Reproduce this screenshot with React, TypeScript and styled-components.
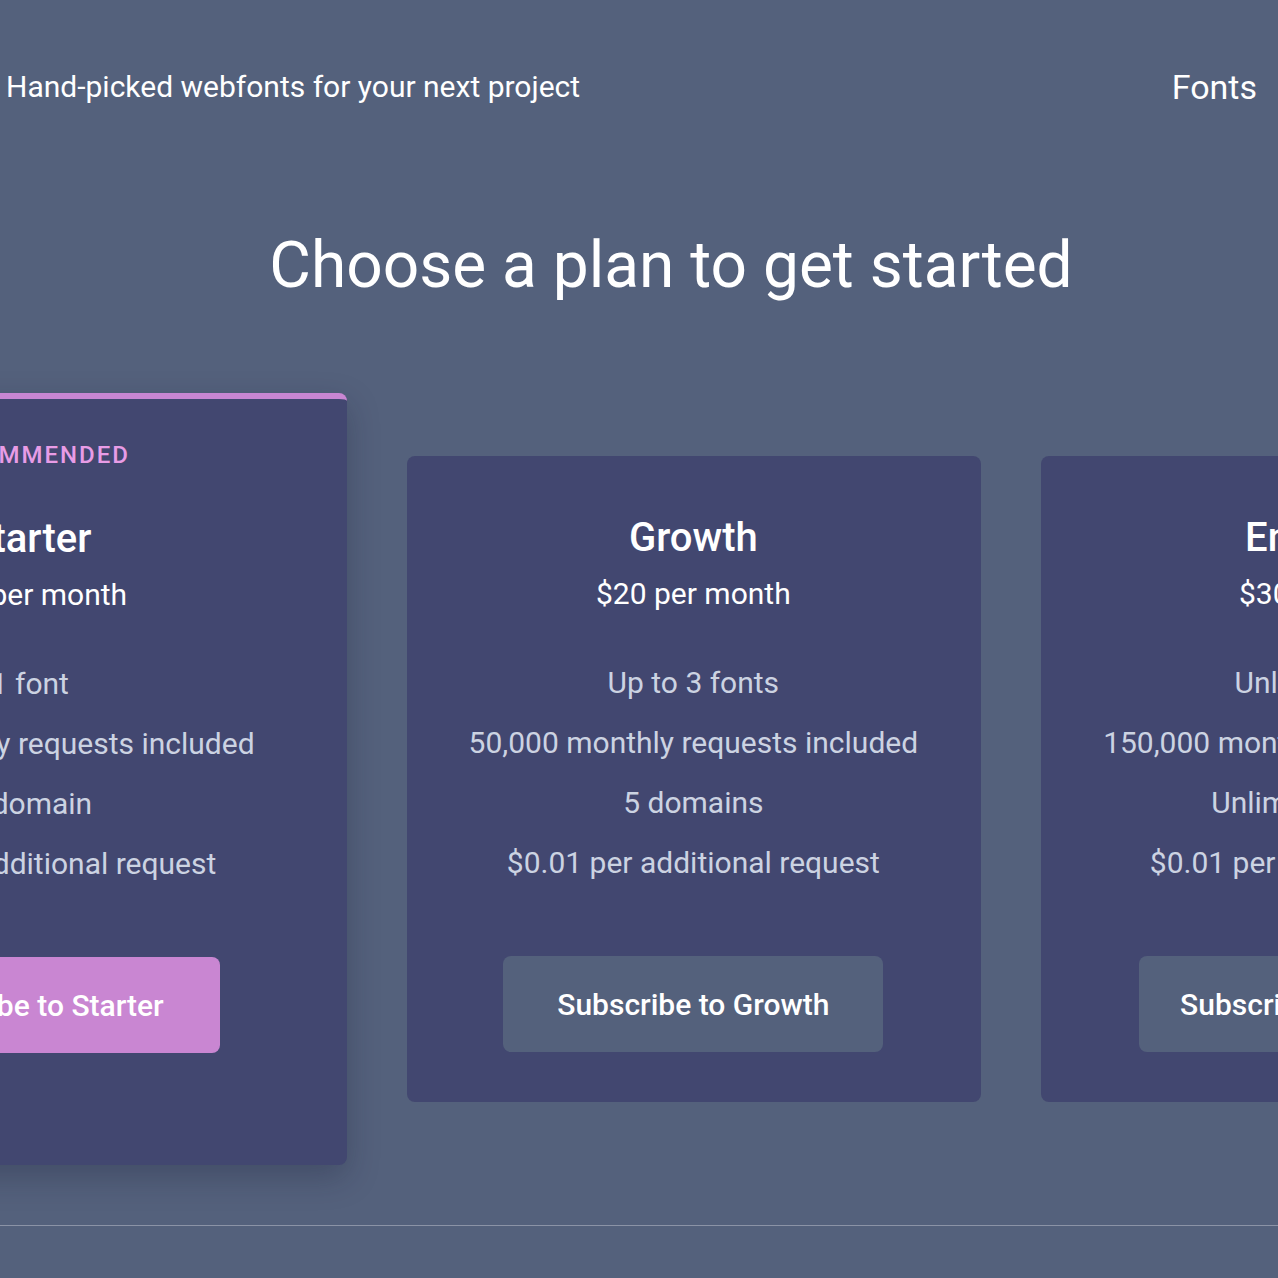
import React from "react";
import styled, { createGlobalStyle } from "styled-components";

const Global = createGlobalStyle`
  html, body {
    margin: 0;
    padding: 0;
    background: #54617c;
    overflow-x: hidden;
  }
  body {
    font-family: Roboto, "Liberation Sans", Arial, sans-serif;
    color: #ffffff;
  }
`;

const Page = styled.div`
  min-height: 1278px;
  background: #54617c;
  display: flex;
  flex-direction: column;
`;

const Header = styled.header`
  display: flex;
  justify-content: space-between;
  align-items: center;
  padding: 70px 21px 0 6px;
`;

const Tagline = styled.div`
  font-size: 30px;
  line-height: 34px;
  color: #ffffff;
`;

const NavLink = styled.a`
  font-size: 34px;
  line-height: 34px;
  color: #ffffff;
  text-decoration: none;
`;

const Title = styled.h1`
  margin: 123px 0 0;
  padding-left: 64px;
  text-align: center;
  font-size: 64px;
  line-height: 77px;
  font-weight: 400;
  color: #ffffff;
`;

const CardRow = styled.div`
  display: flex;
  align-items: center;
  gap: 60px;
  width: max-content;
  margin: 89px 0 0 -287px;
`;

const Card = styled.div<{ $featured?: boolean }>`
  box-sizing: border-box;
  background: #424770;
  border-radius: 8px;
  border-top: ${(p) => (p.$featured ? "6px solid #c986d2" : "none")};
  padding: ${(p) => (p.$featured ? "42px 92px 112px" : "60px 63px 50px 62px")};
  display: flex;
  flex-direction: column;
  align-items: center;
  text-align: center;
  box-shadow: ${(p) =>
    p.$featured ? "0 12px 32px rgba(20, 24, 50, 0.28)" : "none"};
`;

const Badge = styled.div`
  font-size: 24px;
  line-height: 29px;
  font-weight: 500;
  letter-spacing: 2px;
  color: #e89ce6;
  margin-bottom: 47px;
`;

const PlanName = styled.h2`
  margin: 0;
  font-size: 40px;
  line-height: 43px;
  font-weight: 500;
  color: #ffffff;
`;

const Price = styled.div`
  margin-top: 18px;
  font-size: 30px;
  line-height: 34px;
  color: #ffffff;
`;

const Features = styled.ul`
  list-style: none;
  margin: 42px 0 0;
  padding: 0;
`;

const Feature = styled.li`
  font-size: 30px;
  line-height: 60px;
  color: #ccd3e2;
  white-space: nowrap;
`;

const SubscribeButton = styled.button<{ $primary?: boolean }>`
  margin-top: 63px;
  min-width: 380px;
  height: 96px;
  padding: 0 41px;
  border: none;
  border-radius: 8px;
  background: ${(p) => (p.$primary ? "#c986d2" : "#54617c")};
  color: #ffffff;
  font-family: Roboto, "Liberation Sans", Arial, sans-serif;
  font-size: 30px;
  font-weight: 500;
  cursor: pointer;
  white-space: nowrap;
`;

const Footer = styled.footer`
  margin-top: 60px;
  border-top: 1px solid rgba(255, 255, 255, 0.32);
  height: 52px;
`;

type Plan = {
  name: string;
  price: string;
  features: string[];
  featured?: boolean;
};

const plans: Plan[] = [
  {
    name: "Starter",
    price: "$10 per month",
    features: [
      "1 font",
      "10,000 monthly requests included",
      "1 domain",
      "$0.01 per additional request",
    ],
    featured: true,
  },
  {
    name: "Growth",
    price: "$20 per month",
    features: [
      "Up to 3 fonts",
      "50,000 monthly requests included",
      "5 domains",
      "$0.01 per additional request",
    ],
  },
  {
    name: "Enterprise",
    price: "$30 per month",
    features: [
      "Unlimited fonts",
      "150,000 monthly requests included",
      "Unlimited domains",
      "$0.01 per additional request",
    ],
  },
];

export default function App() {
  return (
    <Page>
      <Global />
      <Header>
        <Tagline>Hand-picked webfonts for your next project</Tagline>
        <NavLink href="#">Fonts</NavLink>
      </Header>
      <Title>Choose a plan to get started</Title>
      <CardRow>
        {plans.map((plan) => (
          <Card key={plan.name} $featured={plan.featured}>
            {plan.featured && <Badge>RECOMMENDED</Badge>}
            <PlanName>{plan.name}</PlanName>
            <Price>{plan.price}</Price>
            <Features>
              {plan.features.map((f) => (
                <Feature key={f}>{f}</Feature>
              ))}
            </Features>
            <SubscribeButton $primary={plan.featured}>
              Subscribe to {plan.name}
            </SubscribeButton>
          </Card>
        ))}
      </CardRow>
      <Footer />
    </Page>
  );
}
